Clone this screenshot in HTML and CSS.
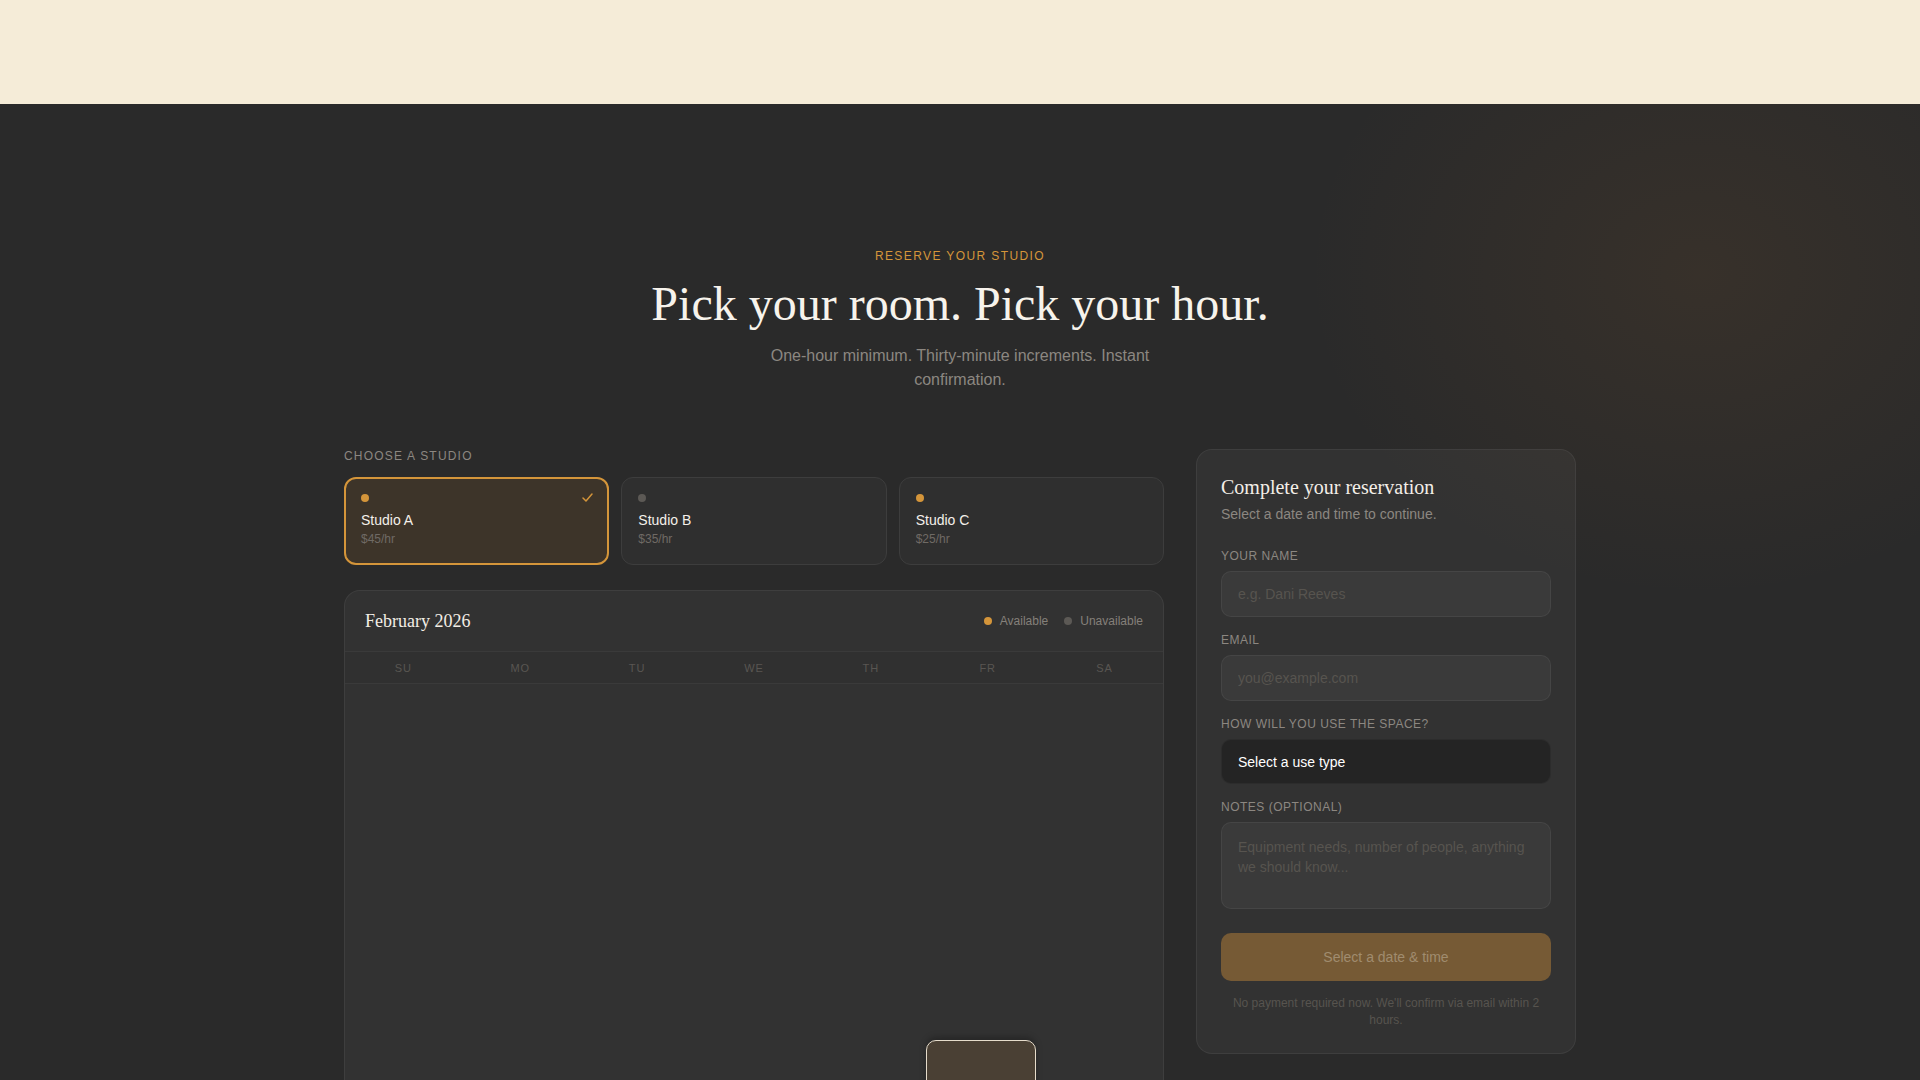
FILE: index.html
```html
<!DOCTYPE html>
<html lang="en">
<head>
  <meta charset="UTF-8">
  <title>Reserve your studio</title>
  <meta name="viewport" content="width=device-width, initial-scale=1.0">
  <link rel="stylesheet" href="styles.css">
</head>
<body>

  <header class="topbar"></header>

  <main class="booking">
    <div class="intro">
      <p class="eyebrow">Reserve your studio</p>
      <h1>Pick your room. Pick your hour.</h1>
      <p class="lede">One-hour minimum. Thirty-minute increments. Instant confirmation.</p>
    </div>

    <div class="layout">
      <section class="picker">
        <p class="section-label">Choose a studio</p>

        <div class="studios">
          <div class="studio selected">
            <span class="dot"></span>
            <svg class="check" width="13" height="13" viewBox="0 0 13 13"><polyline points="2,7 5,10 11,3" fill="none" stroke="#d4953a" stroke-width="1.5" stroke-linecap="round" stroke-linejoin="round"/></svg>
            <div class="studio-name">Studio A</div>
            <div class="studio-price">$45/hr</div>
          </div>
          <div class="studio">
            <span class="dot off"></span>
            <div class="studio-name">Studio B</div>
            <div class="studio-price">$35/hr</div>
          </div>
          <div class="studio">
            <span class="dot"></span>
            <div class="studio-name">Studio C</div>
            <div class="studio-price">$25/hr</div>
          </div>
        </div>

        <div class="calendar">
          <div class="cal-head">
            <h2>February 2026</h2>
            <div class="legend">
              <span class="legend-item"><span class="dot"></span>Available</span>
              <span class="legend-item"><span class="dot off"></span>Unavailable</span>
            </div>
          </div>

          <div class="weekdays">
            <span>SU</span><span>MO</span><span>TU</span><span>WE</span><span>TH</span><span>FR</span><span>SA</span>
          </div>

          <div class="days">
            <div class="day">1</div><div class="day">2</div><div class="day">3</div><div class="day">4</div>
            <div class="day">5</div><div class="day">6</div><div class="day">7</div>
            <div class="day">8</div><div class="day">9</div><div class="day">10</div><div class="day">11</div>
            <div class="day">12</div><div class="day">13</div><div class="day">14</div>
            <div class="day">15</div><div class="day">16</div><div class="day">17</div><div class="day">18</div>
            <div class="day">19</div><div class="day">20</div><div class="day">21</div>
            <div class="day">22</div><div class="day">23</div><div class="day">24</div><div class="day">25</div>
            <div class="day">26</div><div class="day picked">27</div><div class="day">28</div>
          </div>
        </div>
      </section>

      <aside class="form-card">
        <h3>Complete your reservation</h3>
        <p class="form-sub">Select a date and time to continue.</p>

        <form class="form">
          <div class="field">
            <label>YOUR NAME</label>
            <input type="text" placeholder="e.g. Dani Reeves">
          </div>
          <div class="field">
            <label>EMAIL</label>
            <input type="email" placeholder="you@example.com">
          </div>
          <div class="field">
            <label>HOW WILL YOU USE THE SPACE?</label>
            <select>
              <option>Select a use type</option>
              <option>Recording</option>
              <option>Rehearsal</option>
              <option>Photo / video</option>
            </select>
          </div>
          <div class="field">
            <label>NOTES (OPTIONAL)</label>
            <textarea placeholder="Equipment needs, number of people, anything we should know..."></textarea>
          </div>

          <button type="button" class="submit" disabled>Select a date &amp; time</button>
          <p class="fine">No payment required now. We'll confirm via email within 2 hours.</p>
        </form>
      </aside>
    </div>
  </main>

</body>
</html>
```

FILE: styles.css
```css
body {
  margin: 0;
  background: #2a2a2a;
  font-family: "Liberation Sans", Arial, sans-serif;
  color: #f2ede6;
}

.topbar {
  height: 104px;
  background: #f5ecd8;
}

.booking {
  padding: 145px 0 80px;
  background:
    radial-gradient(ellipse 560px 460px at 1700px 170px, rgba(162, 102, 42, 0.11), rgba(162, 102, 42, 0) 70%),
    #2a2a2a;
}

.intro { text-align: center; }

.eyebrow {
  margin: 0 0 13px;
  font-size: 12px;
  line-height: 15px;
  letter-spacing: 1.4px;
  text-transform: uppercase;
  color: #d4953a;
}

h1 {
  margin: 0 0 14px;
  font-family: "Liberation Serif", "Times New Roman", serif;
  font-weight: normal;
  font-size: 48px;
  line-height: 53px;
  color: #f7f3ec;
}

.lede {
  max-width: 420px;
  margin: 0 auto;
  font-size: 16px;
  line-height: 24px;
  color: #8c8781;
}

.layout {
  width: 1232px;
  margin: 57px auto 0;
  display: grid;
  grid-template-columns: 1fr 380px;
  gap: 32px;
  align-items: start;
}

.section-label {
  margin: 0 0 13px;
  font-size: 12px;
  line-height: 15px;
  letter-spacing: 1.2px;
  text-transform: uppercase;
  color: #8c8781;
}

/* studio cards */
.studios {
  display: grid;
  grid-template-columns: repeat(3, 1fr);
  gap: 12px;
}

.studio {
  position: relative;
  padding: 16px 16px 17px;
  background: #2f2f2f;
  border: 1px solid #3d3d3d;
  border-radius: 12px;
}

.studio.selected {
  padding: 15px 15px 16px;
  background: #3d3429;
  border: 2px solid #d4953a;
}

.dot {
  display: block;
  width: 8px;
  height: 8px;
  border-radius: 50%;
  background: #d4953a;
}
.dot.off { background: #5c5955; }

.studio .dot { margin-bottom: 9px; }

.check {
  position: absolute;
  top: 12px;
  right: 13px;
}

.studio-name {
  font-size: 14px;
  line-height: 18px;
  color: #f4f0ea;
}

.studio-price {
  margin-top: 2px;
  font-size: 12px;
  line-height: 16px;
  color: #6f6a65;
}

/* calendar */
.calendar {
  margin-top: 25px;
  background: #323232;
  border: 1px solid rgba(255, 255, 255, 0.06);
  border-radius: 16px;
  overflow: hidden;
}

.cal-head {
  display: flex;
  justify-content: space-between;
  align-items: center;
  padding: 19px 20px;
}

.cal-head h2 {
  margin: 0;
  font-family: "Liberation Serif", "Times New Roman", serif;
  font-weight: normal;
  font-size: 18px;
  line-height: 22px;
  color: #f2ede5;
}

.legend {
  display: flex;
  gap: 16px;
  font-size: 12px;
  color: #85807a;
}

.legend-item {
  display: flex;
  align-items: center;
  gap: 8px;
}

.weekdays {
  display: grid;
  grid-template-columns: repeat(7, 1fr);
  padding: 9px 0 8px;
  border-top: 1px solid rgba(255, 255, 255, 0.05);
  border-bottom: 1px solid rgba(255, 255, 255, 0.05);
  background: rgba(0, 0, 0, 0.04);
  font-size: 11px;
  line-height: 14px;
  letter-spacing: 1px;
  text-align: center;
  color: #595652;
}

.days {
  display: grid;
  grid-template-columns: repeat(7, 1fr);
  gap: 4px;
  padding: 16px 14px 14px;
}

.day {
  aspect-ratio: 1;
  display: flex;
  align-items: center;
  justify-content: center;
  border-radius: 10px;
  font-size: 15px;
  color: rgba(255, 255, 255, 0.025);
}

.day.picked {
  background: #4a4034;
  border: 1.5px solid #e6dccb;
  box-shadow: 0 -3px 6px rgba(0, 0, 0, 0.25);
  color: #f4efe7;
}

/* reservation form */
.form-card {
  padding: 24px;
  background: rgba(255, 255, 255, 0.04);
  border: 1px solid rgba(255, 255, 255, 0.06);
  border-radius: 16px;
}

.form-card h3 {
  margin: 0;
  font-family: "Liberation Serif", "Times New Roman", serif;
  font-weight: normal;
  font-size: 20px;
  line-height: 26px;
  color: #f4efe8;
}

.form-sub {
  margin: 4px 0 0;
  font-size: 14px;
  line-height: 20px;
  color: #8c8781;
}

.form { margin-top: 25px; }

.field { margin-bottom: 16px; }

.field label {
  display: block;
  margin-bottom: 7px;
  font-size: 12px;
  line-height: 15px;
  letter-spacing: 0.5px;
  color: #8c8781;
}

.field input,
.field select,
.field textarea {
  display: block;
  width: 100%;
  box-sizing: border-box;
  font-family: "Liberation Sans", Arial, sans-serif;
  font-size: 14px;
  color: #f2ede6;
  border-radius: 10px;
  outline: none;
}

.field input {
  height: 46px;
  padding: 0 16px;
  background: rgba(255, 255, 255, 0.04);
  border: 1px solid rgba(255, 255, 255, 0.06);
}

.field select {
  height: 45px;
  padding: 0 16px;
  background: #242424;
  border: 1px solid rgba(255, 255, 255, 0.04);
  -webkit-appearance: none;
  appearance: none;
  color: #ffffff;
}

.field textarea {
  height: 87px;
  padding: 14px 16px;
  line-height: 20px;
  background: rgba(255, 255, 255, 0.04);
  border: 1px solid rgba(255, 255, 255, 0.06);
  resize: none;
}

.field input::placeholder,
.field textarea::placeholder { color: #57544f; }

.submit {
  display: block;
  width: 100%;
  height: 48px;
  margin-top: 24px;
  border: none;
  border-radius: 10px;
  background: #765a35;
  font-family: "Liberation Sans", Arial, sans-serif;
  font-size: 14px;
  color: #a08c6f;
}

.fine {
  margin: 14px 0 0;
  padding: 0 8px;
  font-size: 12px;
  line-height: 17px;
  text-align: center;
  color: #57544f;
}
```
